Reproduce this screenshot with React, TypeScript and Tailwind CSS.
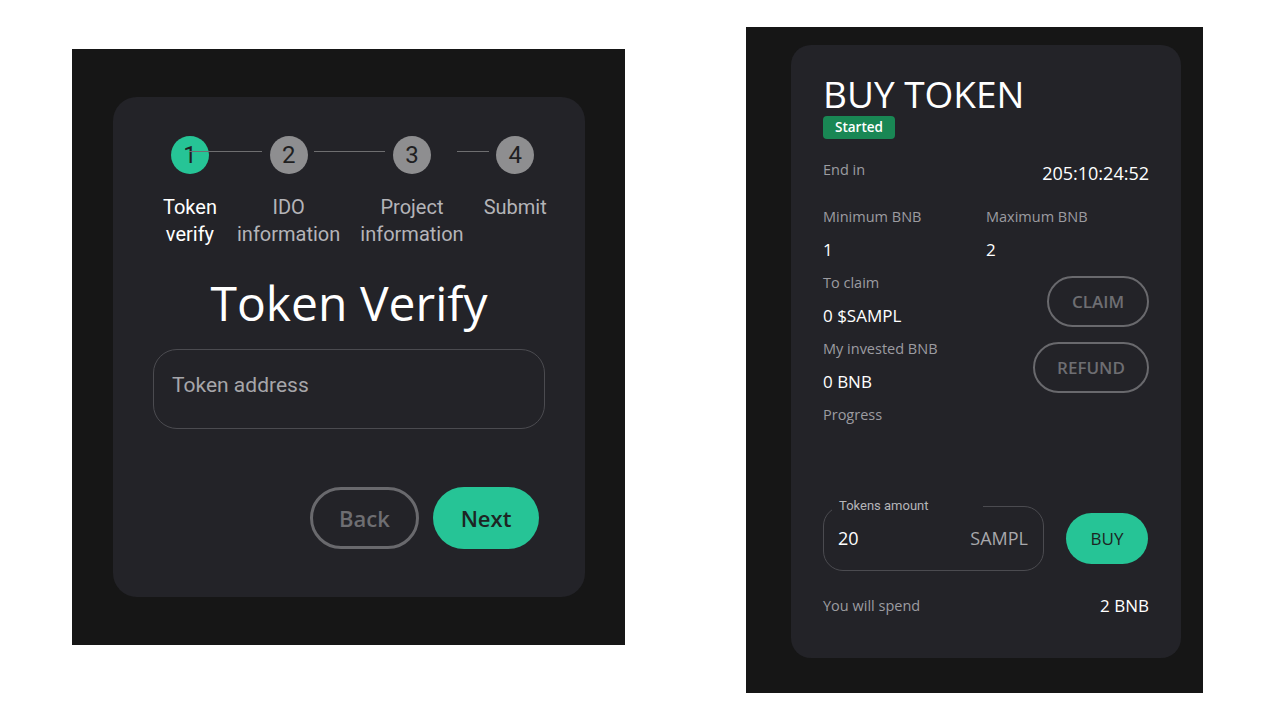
const steps = [
  { n: 1, label: ["Token", "verify"], active: true },
  { n: 2, label: ["IDO", "information"], active: false },
  { n: 3, label: ["Project", "information"], active: false },
  { n: 4, label: ["Submit"], active: false },
];

function Stepper() {
  return (
    <div className="flex items-start gap-[20px] pl-[50px]">
      {steps.map((s) => (
        <div key={s.n} className="flex flex-col items-center">
          <div
            className={`w-[38px] h-[38px] rounded-full flex items-center justify-center text-[24px] text-[#1f1f22] ${
              s.active ? "bg-[#26c496]" : "bg-[#8e8e90]"
            }`}
          >
            {s.n}
          </div>
          <div
            className={`mt-[20px] text-center text-[20px] leading-[27px] ${
              s.active ? "text-white" : "text-[#b4b4b8]"
            }`}
          >
            {s.label.map((l) => (
              <div key={l}>{l}</div>
            ))}
          </div>
        </div>
      ))}
    </div>
  );
}

function TokenVerifyCard() {
  return (
    <div className="bg-[#161616] pl-[41px] pr-[40px] pt-[48px] pb-[48px]">
      <div className="relative w-[472px] h-[500px] rounded-[24px] bg-[#232328] px-[40px] pt-[39px] font-['Roboto',sans-serif]">
        <div className="-mx-[40px]">
          <Stepper />
        </div>
        {/* connector lines */}
        <div className="absolute top-[54px] left-[76px] w-[73px] h-px bg-[#6e6e70]" />
        <div className="absolute top-[54px] left-[201px] w-[71px] h-px bg-[#6e6e70]" />
        <div className="absolute top-[54px] left-[344px] w-[32px] h-px bg-[#6e6e70]" />

        <h1 className="mt-[31px] text-center text-[48px] leading-[48px] text-white font-['Open_Sans',sans-serif]">
          Token Verify
        </h1>

        <div className="mt-[22px] h-[80px] rounded-[24px] border border-[#4b4b50] pl-[18px] pt-[20px]">
          <span className="text-[21px] leading-[30px] text-[#a6a6aa]">Token address</span>
        </div>

        <div className="mt-[58px] flex justify-end gap-[14px] pr-[6px] font-['Open_Sans',sans-serif]">
          <button className="w-[109px] h-[62px] rounded-full border-[3px] border-[#69696d] text-[22px] font-semibold text-[#6e6e72]">
            Back
          </button>
          <button className="w-[106px] h-[62px] rounded-full bg-[#26c496] text-[22px] font-semibold text-[#1d2523]">
            Next
          </button>
        </div>
      </div>
    </div>
  );
}

function BuyTokenCard() {
  const label = "text-[14.5px] font-medium text-[#9c9ca1]";
  const value = "text-[17px] text-white";
  return (
    <div className="mt-[-22px] bg-[#161616] pl-[45px] pr-[22px] pt-[18px] pb-[35px]">
      <div className="w-[390px] h-[613px] rounded-[20px] bg-[#232328] px-[32px] pt-[31px] font-['Open_Sans',sans-serif]">
        <h2 className="text-[37px] leading-[36px] text-white">BUY TOKEN</h2>
        <span className="mt-[4px] inline-block rounded-[4px] bg-[#198754] px-[12px] text-[13.5px] leading-[23px] font-semibold text-white">
          Started
        </span>

        <div className="mt-[14px] flex justify-between leading-[33px]">
          <span className={label}>End in</span>
          <span className="text-[18px] text-white translate-y-[4px]">205:10:24:52</span>
        </div>

        <div className="mt-[14px] grid grid-cols-[163px_1fr] leading-[33px]">
          <div className={label}>Minimum BNB</div>
          <div className={label}>Maximum BNB</div>
          <div className={value}>1</div>
          <div className={value}>2</div>
        </div>

        <div className="flex justify-between leading-[33px]">
          <div>
            <div className={label}>To claim</div>
            <div className={value}>0 $SAMPL</div>
            <div className={label}>My invested BNB</div>
            <div className={value}>0 BNB</div>
            <div className={label}>Progress</div>
          </div>
          <div className="pt-[10px] flex flex-col items-end gap-[15px]">
            <button className="w-[102px] h-[51px] rounded-full border-2 border-[#69696d] text-[17px] font-semibold text-[#6e6e72]">
              CLAIM
            </button>
            <button className="w-[116px] h-[51px] rounded-full border-2 border-[#69696d] text-[17px] font-semibold text-[#6e6e72]">
              REFUND
            </button>
          </div>
        </div>

        <div className="mt-[75px] flex items-center gap-[22px]">
          <div className="relative w-[221px] h-[65px] rounded-[20px] border border-[#4b4b50] flex items-center justify-between pl-[14px] pr-[15px]">
            <span className="absolute -top-[10px] left-[8px] w-[151px] bg-[#232328] pl-[7px] text-[13px] leading-[18px] text-[#b5b5b9] font-['Roboto',sans-serif]">
              Tokens amount
            </span>
            <span className="text-[18px] text-white">20</span>
            <span className="text-[18px] text-[#a8a8ac]">SAMPL</span>
          </div>
          <button className="w-[82px] h-[51px] rounded-full bg-[#26c496] text-[17px] font-medium text-[#1d2523]">
            BUY
          </button>
        </div>

        <div className="mt-[23px] flex justify-between items-center h-[24px]">
          <span className={label}>You will spend</span>
          <span className="text-[17px] text-white">2 BNB</span>
        </div>
      </div>
    </div>
  );
}

export default function App() {
  return (
    <div className="w-[1280px] h-[720px] bg-white flex items-start pl-[72px] pt-[49px] gap-[121px] overflow-hidden">
      <TokenVerifyCard />
      <BuyTokenCard />
    </div>
  );
}
